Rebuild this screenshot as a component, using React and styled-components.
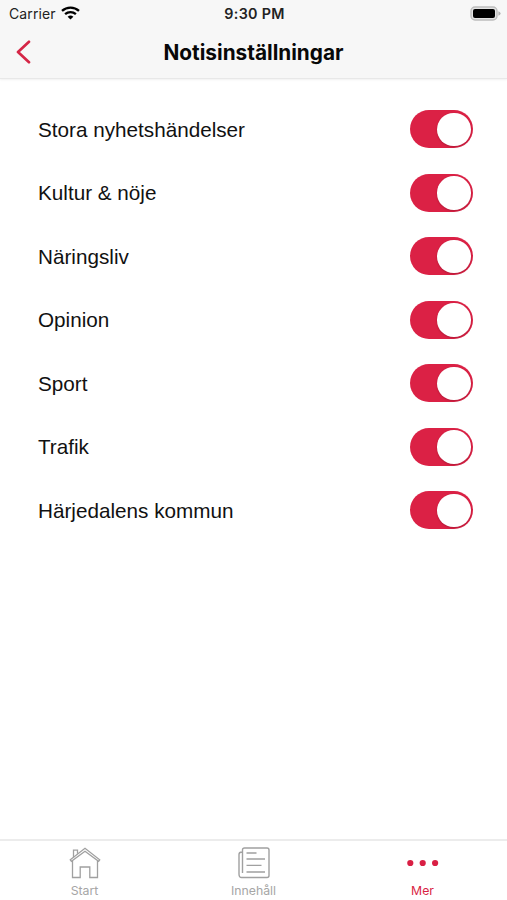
import React, { useState } from 'react'
import styled, { createGlobalStyle } from 'styled-components'

const GlobalStyle = createGlobalStyle`
	* {
		box-sizing: border-box;
	}
	body {
		margin: 0;
		background: #fff;
		color: #111;
		font-family: 'Liberation Sans', Arial, sans-serif;
	}
	button {
		padding: 0;
		border: none;
		background: none;
		font: inherit;
		color: inherit;
	}
`

const topics = [
	'Stora nyhetshändelser',
	'Kultur & nöje',
	'Näringsliv',
	'Opinion',
	'Sport',
	'Trafik',
	'Härjedalens kommun',
]

const Screen = styled.div`
	display: flex;
	flex-direction: column;
	height: 900px;
	overflow: hidden;
`

const Header = styled.header`
	height: 79px;
	background: #f7f7f7;
	border-bottom: 1px solid #e8e8e8;
	box-shadow: 0 1px 2px rgba(0, 0, 0, 0.06);
	font-family: Inter, sans-serif;
`

const StatusBar = styled.div`
	display: grid;
	grid-template-columns: 1fr auto 1fr;
	align-items: center;
	height: 27px;
	padding: 0 6px 0 9px;
	color: #222;
	font-size: 14px;
	line-height: 27px;
`

const Carrier = styled.div`
	display: flex;
	align-items: center;
	gap: 5px;
	letter-spacing: 0.1px;

	svg {
		margin-top: -1px;
	}
`

const Clock = styled.div`
	margin-left: -1px;
	font-size: 14.3px;
	font-weight: 600;
	letter-spacing: 0.3px;
`

const Battery = styled.div`
	display: flex;
	justify-content: flex-end;
`

const NavBar = styled.div`
	display: grid;
	grid-template-columns: 48px 1fr 48px;
	align-items: center;
	height: 50px;
`

const BackButton = styled.button`
	display: flex;
	padding-left: 15px;
`

const Title = styled.h1`
	margin: 0;
	padding-top: 2px;
	color: #080808;
	font-size: 20.8px;
	font-weight: 700;
	letter-spacing: 0;
	line-height: 48px;
	text-align: center;
`

const Settings = styled.main`
	flex: 1;
	padding: 18.5px 34px 0 38px;
`

const Row = styled.div`
	display: flex;
	align-items: center;
	justify-content: space-between;
	height: 63.5px;
	font-size: 20.7px;
`

const Label = styled.span`
	padding-top: 1px;
`

const Switch = styled.button`
	display: flex;
	justify-content: ${props => (props.$on ? 'flex-end' : 'flex-start')};
	align-items: center;
	width: 63px;
	height: 38px;
	padding: 0 2.5px;
	border-radius: 19px;
	background: ${props => (props.$on ? '#db2145' : '#ddd')};
`

const Knob = styled.span`
	width: 33.5px;
	height: 33.5px;
	border-radius: 50%;
	background: #fff;
	box-shadow: 0 1px 2px rgba(60, 0, 15, 0.25);
`

const TabBar = styled.nav`
	display: grid;
	grid-template-columns: repeat(3, 1fr);
	height: 61px;
	border-top: 2px solid #ececec;
	font-family: Inter, sans-serif;
`

const Tab = styled.button`
	display: flex;
	flex-direction: column;
	align-items: center;
	padding-top: 6px;
	color: ${props => (props.$active ? '#d91f44' : '#a6a6a6')};
	font-size: 12.3px;
	line-height: 14px;

	svg {
		margin-bottom: 5px;
	}
`

const WifiIcon = () => (
	<svg width="19" height="14" viewBox="0 0 19 14" fill="none" stroke="#000" strokeWidth="2.3">
		<path d="M1 4.9C5.8 .4 13.2 .4 18 4.9" />
		<path d="M4.1 8.2C7.2 5.4 11.8 5.4 14.9 8.2" />
		<path d="M6.6 10.7Q9.5 8.3 12.4 10.7L9.5 13.6Z" fill="#000" stroke="none" />
	</svg>
)

const BatteryIcon = () => (
	<svg width="31" height="15" viewBox="0 0 31 15">
		<rect x="1" y="1" width="26" height="13" rx="4" fill="#e4e4e4" stroke="#bdbdbd" strokeWidth="1.4" />
		<rect x="3" y="3" width="22" height="9" rx="2" fill="#000" />
		<path d="M28.4 5.2Q30.6 6 30.6 7.5T28.4 9.8Z" fill="#b3b3b3" />
	</svg>
)

const BackIcon = () => (
	<svg width="17" height="24" viewBox="0 0 17 24" fill="none" stroke="#d52646" strokeWidth="2.7">
		<path d="M14 1.8L3 12L14 22.2" strokeLinecap="round" strokeLinejoin="round" />
	</svg>
)

const HomeIcon = () => (
	<svg width="32" height="32" viewBox="0 0 32 32" fill="none" stroke="#a0a0a0" strokeWidth="1.3">
		<path d="M3.5 14V30.5H11.2V20H20.8V30.5H28.5V14" />
		<path d="M4.5 10.5V3.2H8.5V6.7" />
		<path d="M1.3 12.8L16 1.3L30.7 12.8L29.6 14.3L16 4.2L2.4 14.3Z" />
	</svg>
)

const NewsIcon = () => (
	<svg width="32" height="32" viewBox="0 0 32 32" fill="none" stroke="#a0a0a0" strokeWidth="1.4">
		<path d="M4.5 26V3Q4.5 1 6.5 1H29Q31 1 31 3V28.5Q31 30.5 29 30.5H3.5Q1 30.5 1 27V7.5Q1 5 4 5" />
		<path d="M8.5 6H18.5M8.5 12H27M8.5 18.4H23.5M8.5 25H27" />
	</svg>
)

const MoreIcon = () => (
	<svg width="32" height="32" viewBox="0 0 32 32" fill="#d91f44">
		<circle cx="3.3" cy="16" r="3.1" />
		<circle cx="15.7" cy="16" r="3.1" />
		<circle cx="28.1" cy="16" r="3.1" />
	</svg>
)

const TopicRow = ({ label }) => {
	const [on, setOn] = useState(true)
	return (
		<Row>
			<Label>{label}</Label>
			<Switch
				$on={on}
				role="switch"
				aria-checked={on}
				aria-label={label}
				onClick={() => setOn(!on)}
			>
				<Knob />
			</Switch>
		</Row>
	)
}

const App = () => {
	return (
		<Screen>
			<GlobalStyle />
			<Header>
				<StatusBar>
					<Carrier>
						<span>Carrier</span>
						<WifiIcon />
					</Carrier>
					<Clock>9:30 PM</Clock>
					<Battery>
						<BatteryIcon />
					</Battery>
				</StatusBar>
				<NavBar>
					<BackButton aria-label="Tillbaka">
						<BackIcon />
					</BackButton>
					<Title>Notisinställningar</Title>
				</NavBar>
			</Header>
			<Settings>
				{topics.map(topic => (
					<TopicRow key={topic} label={topic} />
				))}
			</Settings>
			<TabBar>
				<Tab>
					<HomeIcon />
					<span>Start</span>
				</Tab>
				<Tab>
					<NewsIcon />
					<span>Innehåll</span>
				</Tab>
				<Tab $active>
					<MoreIcon />
					<span>Mer</span>
				</Tab>
			</TabBar>
		</Screen>
	)
}

export default App
